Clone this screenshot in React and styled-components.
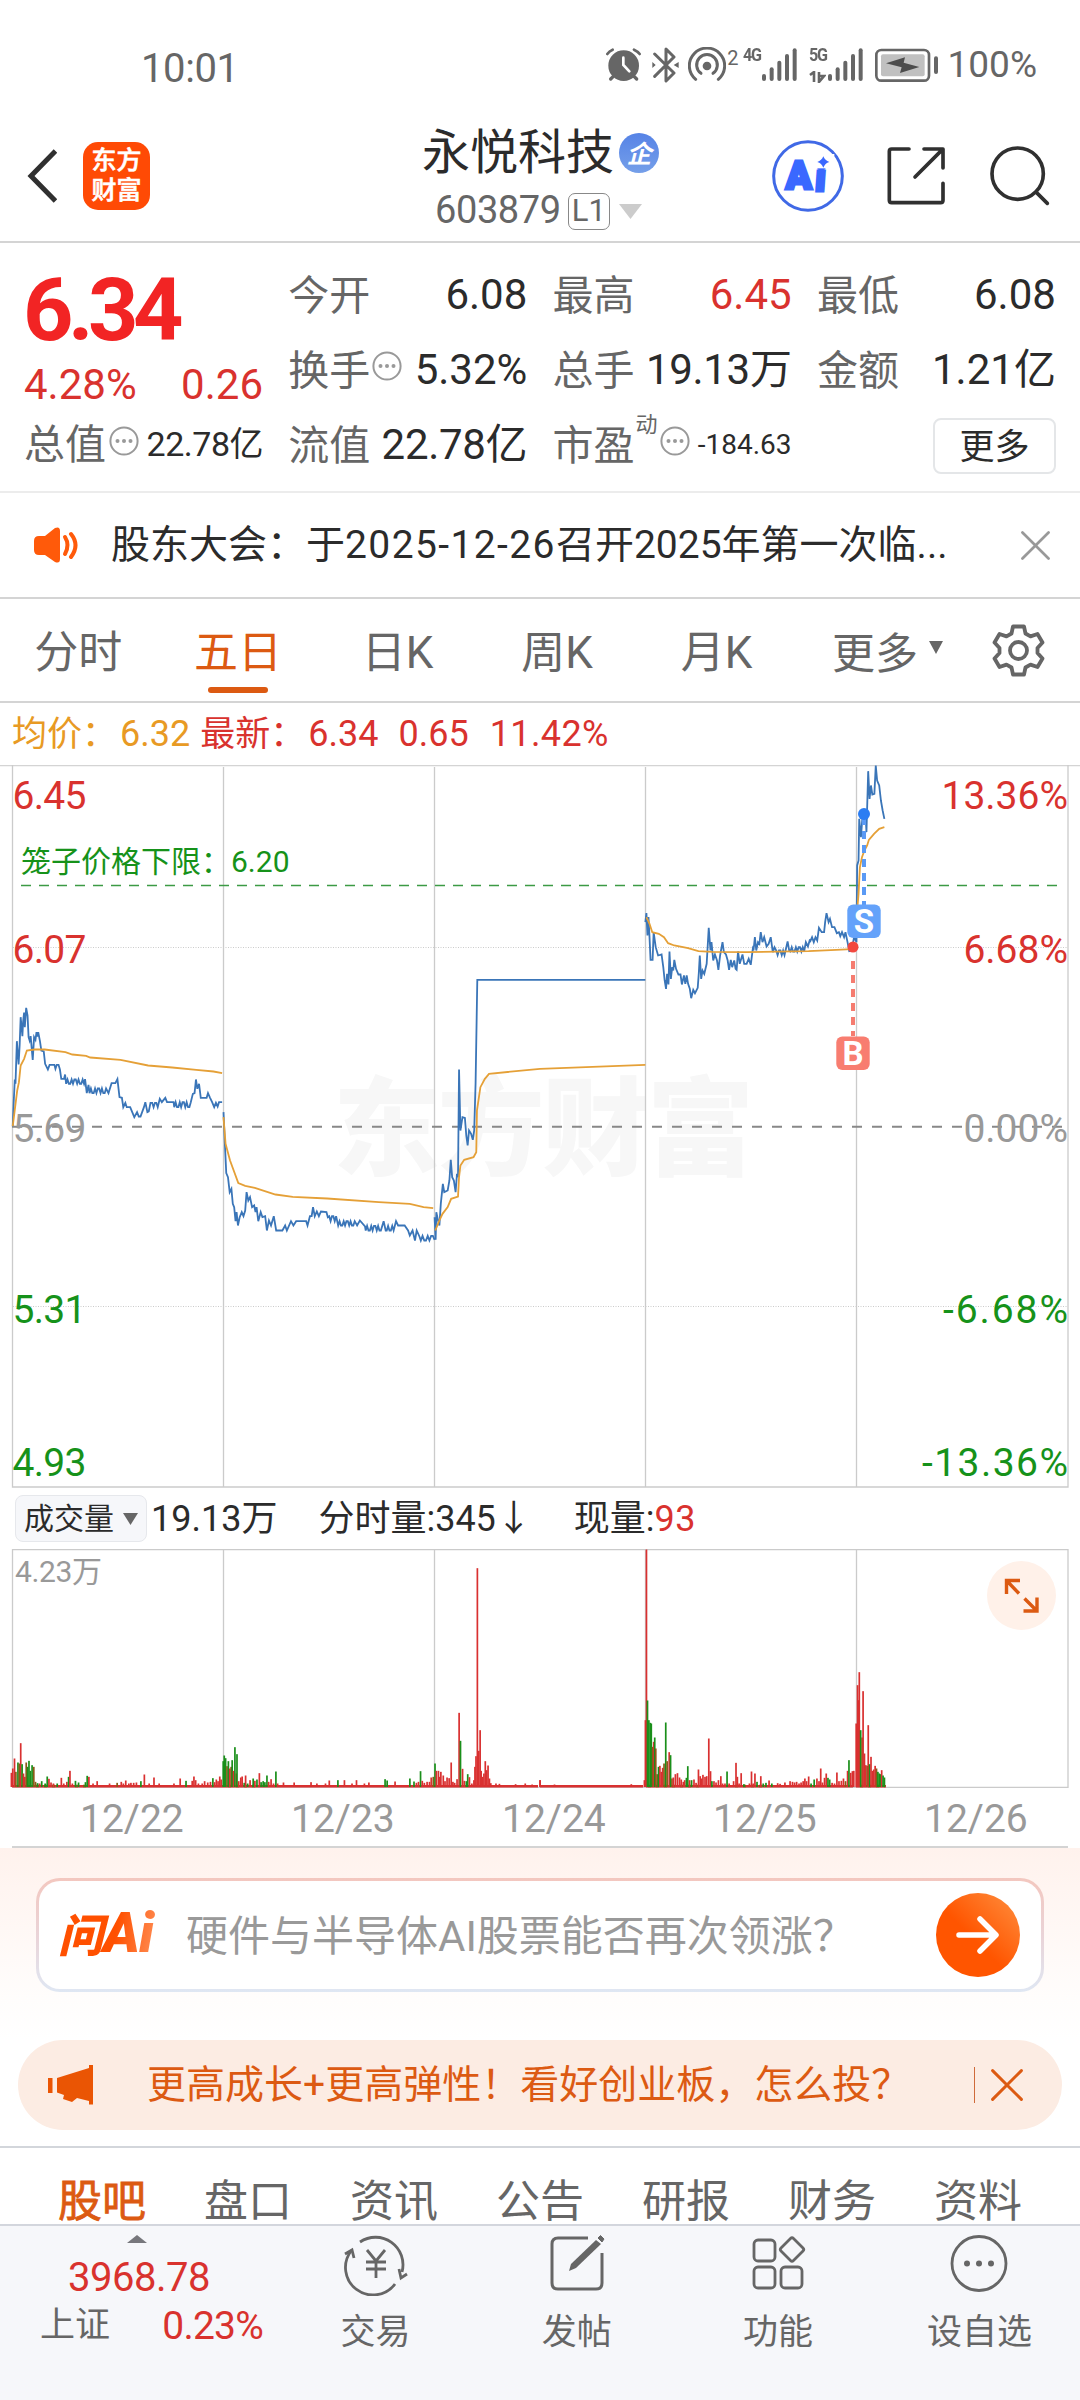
import React from 'react';
import styled, { createGlobalStyle } from 'styled-components';

const C = {
  red: '#d9322e',
  green: '#16921a',
  ink: '#2b2b2b',
  mid: '#666',
  soft: '#999',
  line: '#d4d4d4',
  orange: '#dc5a12',
  blue: '#3a75b8',
  avg: '#e5a037',
};

const Global = createGlobalStyle`
  * { box-sizing: border-box; }
  html, body { margin: 0; background: #fff; }
  body {
    font-family: Roboto, 'Noto Sans CJK SC', sans-serif;
    color: ${C.ink};
    width: 1080px;
  }
  svg { display: block; flex: none; }
  svg text { font-family: Roboto, 'Noto Sans CJK SC', sans-serif; }
`;

const Page = styled.div`
  width: 1080px;
  height: 2400px;
  overflow: hidden;
  display: flex;
  flex-direction: column;
  background: #fff;
`;

const Txt = styled.span`
  font-size: ${(p) => p.$size || 40}px;
  line-height: 1.1;
  color: ${(p) => p.$color || C.ink};
  font-weight: ${(p) => p.$weight || 400};
  letter-spacing: ${(p) => p.$ls || 0}px;
  margin-left: ${(p) => p.$ml || 0}px;
  white-space: nowrap;
  flex: none;
`;
const Wide = styled.span`
  letter-spacing: 1.4px;
`;

/* ---------- status bar ---------- */

const StatusBar = styled.div`
  height: 100px;
  padding: 34px 43px 0 141px;
  display: flex;
  justify-content: space-between;
  align-items: flex-start;
`;
const StatusIcons = styled.div`
  display: flex;
  align-items: center;
  height: 36px;
  margin-top: 13px;
`;
const Clock = styled(Txt)`
  margin-top: 13px;
`;
const Space = styled.i`
  width: ${(p) => p.$w}px;
  flex: none;
`;
const Stack = styled.div`
  height: 36px;
  display: flex;
  flex-direction: column;
  justify-content: space-between;
`;
const Tiny = styled.span`
  font-size: 19px;
  line-height: 16px;
  font-weight: 700;
  color: ${C.mid};
  letter-spacing: -1.5px;
  width: 19px;
  transform: scaleX(0.85);
  transform-origin: left;
`;

const AlarmIcon = () => (
  <svg width="36" height="36" viewBox="48 54 108 108">
    <g fill="none" stroke={C.mid} strokeLinecap="round">
      <path d="M52 75Q58 66 68 62M132 62Q143 67 149 75" strokeWidth="8" />
      <path d="M62 150l8-8M140 150l-8-8" strokeWidth="10" />
    </g>
    <circle cx="101" cy="110" r="46" fill={C.mid} />
    <path d="M100 86V108L118 127" fill="none" stroke="#fff" strokeWidth="8" strokeLinecap="round" />
  </svg>
);
const BluetoothIcon = () => (
  <svg width="27" height="36" viewBox="184 52 81 108">
    <path d="M192 73L250 130L226 154V58L250 82L192 140" fill="none" stroke={C.mid} strokeWidth="9" strokeLinejoin="round" strokeLinecap="round" />
    <path d="M185 97l10 9l-10 9zM264 97l-15 9l15 9z" fill={C.mid} />
  </svg>
);
const HotspotIcon = () => (
  <svg width="38" height="36" viewBox="294 52 114 108">
    <g fill="none" stroke={C.mid} strokeWidth="9" strokeLinecap="round">
      <path d="M317 149A53 53 0 1 1 385 149" />
      <path d="M333 131A31 31 0 1 1 369 131" />
    </g>
    <circle cx="351" cy="109" r="13" fill={C.mid} />
  </svg>
);
const SignalBars = () => (
  <svg width="35" height="36" viewBox="0 52 105 108">
    {[133, 113, 93, 73, 56].map((y, i) => (
      <rect key={y} x={i * 23} y={y} width="12" height={154 - y} rx="6" fill={C.mid} />
    ))}
  </svg>
);
const DataArrows = () => (
  <svg width="17" height="12" viewBox="0 0 17 12">
    <path d="M1 4L5 1V11M10 1V11L15 5L10 5" fill="none" stroke={C.mid} strokeWidth="2.6" />
  </svg>
);
const BatteryIcon = () => (
  <svg width="64" height="36" viewBox="855 52 192 108">
    <rect x="859" y="61" width="158" height="92" rx="15" fill="#fff" stroke={C.mid} strokeWidth="8" />
    <rect x="873" y="74" width="131" height="66" rx="6" fill="#c0c0c0" />
    <path d="M888 101L945 83L941 99L988 112L930 130L935 113Z" fill="#4c4c4c" />
    <rect x="1032" y="80" width="12" height="53" rx="6" fill={C.mid} />
  </svg>
);

/* ---------- header ---------- */

const Header = styled.header`
  height: 143px;
  border-bottom: 2px solid ${C.line};
  display: flex;
  padding: 0 30px 0 27px;
`;
const HeadSide = styled.div`
  display: flex;
  align-items: center;
  height: 151px;
  width: ${(p) => p.$w}px;
  justify-content: ${(p) => (p.$end ? 'flex-end' : 'flex-start')};
`;
const Logo = styled.div`
  width: 67px;
  height: 68px;
  margin-left: 26px;
  border-radius: 15px;
  background: #ff4a05;
  color: #fff;
  font: 500 25px/30px Roboto, 'Noto Sans CJK SC', sans-serif;
  -webkit-text-stroke: 0.6px #fff;
  display: flex;
  flex-direction: column;
  align-items: center;
  justify-content: center;
`;
const Title = styled.div`
  flex: 1;
  display: flex;
  flex-direction: column;
`;
const TitleRow = styled.div`
  display: flex;
  align-items: center;
  height: 50px;
  margin-top: ${(p) => p.$mt}px;
  margin-left: ${(p) => p.$ml}px;
`;
const Badge = styled.div`
  width: 40px;
  height: 40px;
  margin-left: 5px;
  border-radius: 50%;
  background: linear-gradient(#5683e6, #759fe9);
  color: #fff;
  font: italic 700 25px/38px 'Noto Sans CJK SC', sans-serif;
  text-align: center;
`;
const Level = styled.span`
  width: 42px;
  height: 37px;
  margin-left: 7px;
  border: 1.5px solid #888;
  border-radius: 7px;
  font-size: 31px;
  line-height: 34px;
  text-align: center;
  color: ${C.mid};
`;

const AiIcon = () => (
  <svg width="72" height="72" viewBox="547 328 216 216">
    <circle cx="655" cy="436" r="103" fill="none" stroke="#4069e6" strokeWidth="9" />
    <g fill="#3a68ff" stroke="#3a68ff" strokeWidth="9" fontWeight="900" fontSize="114">
      <text x="588" y="474" textLength="78" lengthAdjust="spacingAndGlyphs">A</text>
      <text x="674" y="480" transform="skewX(-4) translate(34 0)">i</text>
    </g>
    <rect x="676" y="370" width="58" height="43" fill="#fff" />
    <path d="M701 377Q706 390 719 394Q706 398 701 411Q696 398 683 394Q696 390 701 377Z" fill="#3a68ff" />
  </svg>
);
const ShareIcon = () => (
  <svg width="59" height="60" viewBox="892 347 177 180">
    <g fill="none" stroke="#303030" strokeWidth="11" strokeLinecap="round" strokeLinejoin="round">
      <path d="M958 356H906Q899 356 899 363V510Q899 517 906 517H1053Q1060 517 1060 510V459" />
      <path d="M1003 356H1060V413M976 440L1058 358" />
    </g>
  </svg>
);
const SearchIcon = () => (
  <svg width="61" height="60" viewBox="1200 345 183 180">
    <g fill="none" stroke="#303030" strokeWidth="11" strokeLinecap="round">
      <circle cx="1286" cy="428" r="77" />
      <path d="M1342 484L1375 517" />
    </g>
  </svg>
);

/* ---------- quote ---------- */

const Quote = styled.section`
  height: 250px;
  border-bottom: 2px solid #ececec;
  padding: 15px 24px 0 24px;
  display: grid;
  grid-template-columns: repeat(4, 239px);
  column-gap: 25.3px;
`;
const QuoteCol = styled.div`
  display: flex;
  flex-direction: column;
`;
const Cell = styled.div`
  height: ${(p) => p.$h || 75}px;
  display: flex;
  align-items: center;
  justify-content: space-between;
`;
const Label = styled.span`
  font-size: 41px;
  line-height: 50px;
  color: ${C.mid};
  display: flex;
  align-items: center;
`;
const Price = styled.div`
  height: 106px;
  padding: 0;
  margin-left: -1px;
  font-size: 88px;
  line-height: 104px;
  font-weight: 700;
  color: #f22424;
  letter-spacing: -5.5px;
`;
const Sup = styled.sup`
  font-size: 22px;
  line-height: 22px;
  margin: -42px 2px 0 1px;
`;
const MoreBtn = styled.button`
  width: 123px;
  height: 56px;
  margin-left: auto;
  border: 2px solid #e4e6e8;
  border-radius: 8px;
  background: #fff;
  padding: 0 0 4px;
  font: 400 35px/48px 'Noto Sans CJK SC', sans-serif;
  color: ${C.ink};
`;
const DotsSvg = styled.svg`
  margin-top: -9px;
`;
const DotsIcon = () => (
  <DotsSvg width="30" height="30" viewBox="0 0 30 30">
    <circle cx="15" cy="15" r="13.6" fill="none" stroke="#999" strokeWidth="2" />
    {[8.5, 15, 21.5].map((x) => <circle key={x} cx={x} cy="15" r="2" fill="#999" />)}
  </DotsSvg>
);

/* ---------- notice ---------- */

const Notice = styled.section`
  height: 106px;
  border-bottom: 2px solid ${C.line};
  padding: 0 30px 0 33px;
  display: flex;
  align-items: center;
  justify-content: space-between;
`;
const Row = styled.div`
  display: flex;
  align-items: center;
`;
const SpeakerIcon = () => (
  <svg width="46" height="36" viewBox="0 0 46 36">
    <path d="M6 9H12L22 1Q27-1 27 4V32Q27 37 22 35L12 28H6Q1 28 1 23V14Q1 9 6 9Z" fill="#ff5a0a" />
    <g fill="none" stroke="#ff5a0a" strokeWidth="4" strokeLinecap="round">
      <path d="M32 10Q37 18 32 27" />
      <path d="M38 7Q47 18 38 30" />
    </g>
  </svg>
);
const Cross = ({ size, color, w = 2.8 }) => (
  <svg width={size} height={size} viewBox="0 0 30 30">
    <path d="M1.5 1.5L28.5 28.5M28.5 1.5L1.5 28.5" stroke={color} strokeWidth={w} strokeLinecap="round" />
  </svg>
);

/* ---------- period tabs ---------- */

const Periods = styled.nav`
  height: 104px;
  border-bottom: 2px solid ${C.line};
  display: flex;
  padding-right: 35px;
`;
const Period = styled.div`
  width: 159.6px;
  height: 102px;
  padding: 29px 3px 0 0;
  display: flex;
  flex-direction: column;
  align-items: center;
  font-size: 44px;
  line-height: 50px;
  color: ${(p) => (p.$on ? C.orange : C.mid)};
  &::after {
    content: '';
    width: 60px;
    height: 6px;
    margin-top: 9px;
    border-radius: 3px;
    background: ${(p) => (p.$on ? C.orange : 'transparent')};
  }
`;
const PeriodMore = styled.div`
  height: 102px;
  margin-left: 34px;
  display: flex;
  align-items: center;
  font-size: 43px;
  color: ${C.mid};
  gap: 11px;
  svg { margin-bottom: 5px; }
`;
const GearWrap = styled.div`
  margin: 25px 0 0 auto;
`;
const Tri = ({ w, h, color, up }) => (
  <svg width={w} height={h} viewBox="0 0 10 10" preserveAspectRatio="none">
    <path d={up ? 'M0 10H10L5 0Z' : 'M0 0H10L5 10Z'} fill={color} />
  </svg>
);
const GearIcon = () => (
  <svg width="53" height="53" viewBox="0 0 53 53" fill="none" stroke={C.mid} strokeWidth="3.8" strokeLinejoin="round">
    <path d="M21 2.5H32L33.5 9.5L38.5 12.4L45.5 10L50.5 18.5L45.5 24V29L50.5 34.5L45.5 43L38.5 40.6L33.5 43.5L32 50.5H21L19.5 43.5L14.5 40.6L7.5 43L2.5 34.5L7.5 29V24L2.5 18.5L7.5 10L14.5 12.4L19.5 9.5Z" />
    <circle cx="26.5" cy="26.5" r="8.5" />
  </svg>
);

const Legend = styled.div`
  height: 62px;
  padding: 2px 0 0 12px;
  display: flex;
  align-items: center;
`;

/* ---------- price chart ---------- */

const Chart = styled.svg`
  width: 1080px;
  height: ${(p) => p.$h}px;
`;

const zig = (x0, x1, a, b, step = 4) => {
  const out = [];
  for (let x = x0, i = 0; x < x1; x += step, i += 1) {
    out.push([x, [a, b, a, a, b, a, b, b][i % 8]]);
  }
  return out;
};
const parse = (s) => s.trim().split(/\s+/).map((p) => p.split(',').map(Number));
const poly = (...parts) => parts.flatMap((p) => (typeof p === 'string' ? parse(p) : p)).map((p) => p.join(',')).join(' ');

const LEFT = {
  price: [
    poly(
      '37,1127 40,1050 43,987 45,1000 49,872 54,942 57,885 60,800 65,857 67,815 70,786 72,830 76,772 80,795 83,860 86,870 89,857 95,928 99,860 103,868 106,845 108,858 111,845 116,872 120,900 127,903 131,940 139,957 144,943 158,943 161,955 165,943 170,943 174,957 178,985 186,985 189,972',
      zig(192, 247, 1000, 987),
      '247,986 252,1028 257,1003',
      zig(260, 312, 1028, 1014),
      '315,1028 324,998 335,998 341,986 347,1040 354,1042 358,1070 364,1057 368,1070 378,1070 390,1100 398,1085 403,1098 408,1098 418,1070 422,1055 428,1085 432,1083 437,1057',
      zig(442, 462, 1057, 1070),
      '464,1045 470,1055 480,1042 485,1055 504,1055',
      zig(506, 556, 1070, 1055),
      '560,1030 565,1028 569,987 573,1015 578,1000 583,1042 600,1042 604,1028 610,1042 616,1055 622,1070 627,1057 632,1068 636,1055 645,1055',
    ),
    poly(
      '649,1085 653,1180 657,1268 662,1280 667,1325 672,1315 676,1360 680,1370 684,1412 687,1385 691,1425 696,1400 702,1385 707,1397 712,1380 716,1325 721,1350 726,1340 732,1370 738,1365 742,1385 745,1370 750,1412 757,1385 762,1400 770,1397 775,1440 781,1410 787,1425 795,1397 802,1440 820,1440 828,1425 833,1440 845,1412 852,1425 860,1412 889,1412 893,1425 900,1397 905,1397 909,1370 914,1397 920,1383 926,1397 932,1383 948,1385 952,1400',
      zig(956, 980, 1397, 1412),
      zig(982, 1034, 1425, 1412),
      '1037,1425 1045,1410 1060,1428',
      zig(1062, 1110, 1440, 1426),
      '1114,1412 1120,1440',
      zig(1123, 1147, 1440, 1426),
      '1150,1412 1156,1425 1175,1425 1185,1440 1190,1455 1198,1440 1205,1470 1210,1440 1218,1458',
      zig(1222, 1258, 1470, 1456, 5),
      '1262,1468',
    ),
    poly('1262,1400 1265,1468 1267,1385 1272,1410 1276,1425 1280,1360 1286,1300 1290,1325 1300,1320 1305,1290 1309,1228 1313,1280 1318,1290 1323,1325 1327,1270 1330,1280 1333,957 1337,1140 1343,1100 1350,1102 1354,1155 1358,1185 1362,1140 1368,1150 1373,1168 1377,1140 1381,1000 1386,688 1874,688'),
  ],
  avg: [
    '37,1127 50,1020 55,995 60,945 70,925 78,900 100,897 130,897 190,905 210,912 250,916 262,921 350,928 430,945 500,951 570,958 620,963 645,968',
    '649,1100 655,1180 668,1230 692,1298 712,1306 740,1312 800,1332 850,1339 950,1344 1100,1355 1190,1360 1230,1370 1258,1373',
    '1264,1440 1275,1412 1285,1390 1300,1370 1310,1345 1330,1338 1333,1280 1337,1245 1348,1228 1375,1220 1383,1205 1385,1080 1395,1010 1408,985 1420,970 1568,955 1874,943',
  ],
};
const RIGHT = {
  price: [
    poly(
      '306,515 309,488 312,555 315,500 318,560 321,628 327,628 330,545 336,590 343,615 353,612 358,650 362,690 366,715 369,670 373,702 376,603 380,685 384,650 387,660 390,628 395,655 402,672 408,672 412,702 418,675 422,700 426,675 430,700 435,715 439,743 445,718 450,728 458,712 461,670 464,615 468,685 472,660 477,670 484,640 490,532 495,600 498,575 503,630 508,612 514,630 518,658 523,615 530,575 534,605 540,612 545,630 549,658 554,628 558,650 564,630 568,655 571,658 575,603 580,640 588,612 593,640 600,640 606,625 612,643 618,595 620,600 624,560 628,600 633,575 637,580 641,545 646,575 651,560 658,588 664,580 670,560 676,605 681,590',
      zig(686, 713, 600, 614),
      '719,573 724,602',
      zig(727, 768, 603, 590),
      '772,575 778,588 783,570 785,572 790,560 795,575 800,560 805,570 810,532 818,545 825,545 828,515 832,488 838,515 842,505 848,530 855,530 862,548 868,545 872,557 877,545 883,560 887,545 893,575 898,602 905,600 912,560 919,575 921,345 925,330 927,205 932,260 937,190 942,210 945,185 948,245 953,62 957,145 961,105 965,132 971,130 975,45 979,90 985,105 990,150 995,180 1000,205',
    ),
  ],
  avg: [
    '309,500 318,520 326,545 345,550 360,560 372,578 390,585 430,593 460,602 500,604 600,605 780,602 860,598 905,596',
    '921,480 925,430 929,350 935,320 942,300 950,285 955,268 970,250 985,235 1000,230',
  ],
};

const Curves = ({ data, x }) => (
  <g transform={`translate(${x} -14.5) scale(.34437 .33333)`} fill="none">
    {data.price.map((p) => (
      <polyline key={p} points={p} stroke={C.blue} strokeWidth="1.8" vectorEffect="non-scaling-stroke" />
    ))}
    {data.avg.map((p) => (
      <polyline key={p} points={p} stroke={C.avg} strokeWidth="1.8" vectorEffect="non-scaling-stroke" />
    ))}
  </g>
);

const SCALE = [
  ['6.45', '13.36%', C.red, 43.5],
  ['6.07', '6.68%', C.red, 197.5],
  ['5.69', '0.00%', C.soft, 377],
  ['5.31', '-6.68%', C.green, 557.5, 125],
  ['4.93', '-13.36%', C.green, 711, 146],
];

const Marker = ({ x, y, fill, children }) => (
  <g>
    <rect x={x - 16.7} y={y} width="33.4" height="33.4" rx="6" fill={fill} />
    <text x={x} y={y + 28} fontSize="33" fontWeight="700" textAnchor="middle" fill="#fff">{children}</text>
  </g>
);

const PriceChart = () => (
  <Chart $h={724} viewBox="0 0 1080 724">
    <text x="333" y="402" fontSize="107" fontWeight="900" fill="#f7f7f7" textLength="421">东方财富</text>
    <g stroke="#cbcbcb" strokeWidth="1.3" fill="none">
      <path d="M0 .5H1080" stroke={C.line} strokeWidth="1.6" />
      <path d="M12.5 0V722H1068V0M223.5 2V722M434.5 2V722M645.5 2V722M856.5 2V722" />
      <path d="M13 182.5H1068M13 541.5H1068" strokeDasharray="1 1.5" strokeWidth="1" />
    </g>
    <path d="M21 120.5H1058" stroke="#3c9a45" strokeWidth="1.5" strokeDasharray="10 8" />
    <path d="M12 361.7H1062" stroke="#888" strokeWidth="2" strokeDasharray="10 10" />
    <Curves data={LEFT} x={0} />
    <Curves data={RIGHT} x={540} />
    <text x="21" y="107" fontSize="30" fill={C.green}>笼子价格下限：</text>
    <text x="231" y="107" fontSize="30" fill={C.green}>6.20</text>
    {SCALE.map(([price, pct, color, y, len]) => (
      <g key={price} fill={color} fontSize="39">
        <text x="12.5" y={y} textLength="74">{price}</text>
        <text x="1068" y={y} textAnchor="end" textLength={len}>{pct}</text>
      </g>
    ))}
    <path d="M864 52V140" stroke="#5a9af5" strokeWidth="4" strokeDasharray="8 6" />
    <circle cx="864" cy="49" r="6" fill="#2b7df2" />
    <Marker x={864} y={139.5} fill="#64a2fa">S</Marker>
    <path d="M853 196V271" stroke="#f57c70" strokeWidth="4" strokeDasharray="8 6" />
    <circle cx="853" cy="182" r="5.5" fill="#f2483f" />
    <Marker x={853} y={271.5} fill="#f87d70">B</Marker>
  </Chart>
);

/* ---------- volume ---------- */

const VolHead = styled.div`
  height: 60px;
  padding: 6px 0 0 15px;
  display: flex;
  align-items: flex-start;
`;
const VolBtn = styled.div`
  width: 132px;
  height: 47px;
  border: 1.5px solid #e6e8ec;
  border-radius: 8px;
  background: #f6f7fa;
  display: flex;
  align-items: center;
  padding-left: 8px;
  gap: 9px;
`;
const VolText = styled.div`
  height: 47px;
  display: flex;
  align-items: center;
  padding-top: 3px;
`;

const R = '#d93030';
const G = '#1a8f1a';
const M = '#8a5a18';
const VOL = {
  left: `33,818,R 37,805,R 42,775,R 46,815,M 52,787,G 56,790,M 60,729,R 64,792,G 68,820,R 72,830,R 76,787,M 80,800,G 84,782,G 88,812,G 93,795,G 98,800,M 103,845,M 109,849,G 115,850,R 121,843,G 131,850,G 137,829,G 142,836,R 148,847,R 155,850,R 166,850,G 178,833,R 185,850,R 194,845,R 199,830,G 203,812,R 210,850,R 219,842,G 228,847,G 248,846,G 253,827,G 258,830,R 270,850,R 282,843,R 318,850,R 340,848,M 352,845,R 358,850,R 365,841,R 374,850,R 380,848,R 388,848,R 396,847,R 409,843,G 419,823,R 433,850,R 447,832,R 462,850,R 505,850,R 523,835,R 540,842,G 558,842,R 563,829,R 568,840,R 576,850,R 587,850,R 594,843,R 603,847,R 611,845,R 618,834,G 623,846,R 628,838,R 633,843,R 638,829,R 642,838,R
648,783,G 651,766,G 655,774,G 659,798,M 663,783,G 667,805,R 671,800,M 674,780,G 678,812,R 682,741,G 686,820,M 688,762,G 693,843,R 699,832,R 703,829,R 709,848,G 713,826,R 719,850,G 726,840,R 735,835,G 740,842,R 746,838,G 753,819,R 758,846,G 764,843,G 769,846,G 775,826,G 780,845,R 787,837,R 794,850,R 801,814,G 806,850,R 823,847,R 854,847,R 903,846,R 920,850,R 945,850,R 956,841,R 981,840,G 1000,840,R 1022,850,R 1035,840,R 1058,850,R 1071,847,R 1118,837,G 1124,841,G 1147,844,R 1190,835,G 1202,844,G 1209,848,R 1215,845,R 1221,813,G 1226,842,R 1232,848,R 1240,845,R 1247,845,R 1252,832,R 1258,830,M
1263,790,G 1267,812,R 1273,812,R 1277,830,R 1280,815,R 1287,826,R 1292,843,R 1298,832,R 1304,834,R 1310,787,R 1315,845,R 1320,848,R 1327,837,R 1333,638,R 1337,722,G 1343,806,R 1348,842,R 1354,843,G 1358,822,G 1363,831,R 1370,850,R 1376,840,R 1379,800,R 1382,768,R 1386,204,R 1390,752,R 1394,690,R 1397,812,R 1401,830,R 1405,820,R 1409,783,R 1413,810,R 1417,796,R 1421,835,R 1425,849,R 1440,850,R 1450,851,R 1497,852,R 1525,850,R 1545,853,R 1568,840,R`,
  right: `0,840,R 42,853,R 265,852,R 303,840,R 306,660,R 309,148,R 312,601,G 316,660,G 320,668,G 323,670,G 327,740,M 330,725,R 333,712,G 336,745,M 340,822,M 344,800,G 348,797,R 352,815,R 356,803,R 360,790,M 365,667,G 369,783,M 375,756,R 379,765,G 383,835,M 387,832,R 393,822,R 399,819,R 405,832,R 410,838,R 416,845,R 420,840,R 425,833,G 429,798,G 434,840,R 440,840,G 447,838,R 453,848,R 460,808,R 465,828,R 469,835,R 473,824,R 479,830,R 484,828,R 490,715,R 495,813,R 499,843,G 505,843,R 511,847,R 518,840,R 525,828,R 530,850,R 537,850,R 543,814,G 549,850,R 562,843,R 569,788,R 573,830,R 578,850,R 584,819,R 592,852,G 608,850,R 614,814,R 619,850,R 624,820,R 630,845,G 641,828,R 648,850,G 656,848,G 665,841,R 673,850,G 690,849,R 697,851,R 711,847,R 726,843,R 733,845,R 739,847,R 745,845,R 752,850,R 758,847,R 764,843,R 769,835,R 774,843,R 780,829,R 787,850,G 796,838,G 804,835,R 810,843,R 815,805,R 820,847,R 826,833,R 831,820,R 836,833,G 841,838,G 848,848,R 855,850,R 862,817,R 868,843,R 875,842,R 881,835,R 887,843,M 893,812,R 897,780,G 902,818,R 907,813,R 911,812,R
918,670,R 922,555,R 925,600,R 927,516,R 931,690,G 935,712,M 938,573,R 942,760,R 946,795,R 950,797,M 953,675,R 957,792,G 961,770,R 965,812,R 969,808,R 973,797,R 977,805,M 981,815,G 985,820,G 989,822,G 992,810,R 996,826,G 1000,832,G`,
};
const TONE = { R, G, M };
const bars = (s) => s.trim().split(/\s+/).map((b) => b.split(','));

const VolBars = ({ data, x }) => (
  <g>
    {bars(data).map(([bx, top, tone]) => {
      const px = x + Number(bx) / 2.9037;
      const py = (Number(top) - 148) / 3 + 0.5;
      return <rect key={bx} x={px - 0.8} y={py} width="1.7" height={238 - py} fill={TONE[tone]} />;
    })}
  </g>
);

const VolWrap = styled.div`
  position: relative;
  height: 239px;
`;
const Expand = styled.button`
  position: absolute;
  right: 24px;
  top: 12px;
  width: 69px;
  height: 69px;
  padding: 0;
  border: 0;
  border-radius: 50%;
  background: #fff1e9;
  display: grid;
  place-items: center;
`;

const VolumeChart = () => (
  <VolWrap>
    <Chart $h={239} viewBox="0 0 1080 239">
      <path
        d="M12.5 238.3V.7H1068V238.3H12.5M223.5 1V238M434.5 1V238M645.5 1V238M856.5 1V238"
        fill="none" stroke="#cbcbcb" strokeWidth="1.3"
      />
      <path d="M12 237.2H538M540 237.2H643M646 237.2H853M856 237.2H886" stroke={R} strokeWidth="2.4" />
      <path d="M36 237H60M75 237H88M228 237H260M648 237H700M735 237H765M860 237H885" stroke={M} strokeWidth="2.4" strokeDasharray="3 5" />
      <VolBars data={VOL.left} x={0} />
      <VolBars data={VOL.right} x={540} />
      <text x="15" y="32.5" fontSize="30" fill={C.soft} textLength="87">4.23万</text>
    </Chart>
    <Expand>
      <svg width="35" height="36" viewBox="0 0 35 36" fill="none" stroke={C.orange} strokeWidth="3.4">
        <path d="M16 2.5H2.5V16M3 3L15 15.5M19.5 33H33V19.5M32.5 32.5L20.5 20.5" />
      </svg>
    </Expand>
  </VolWrap>
);

const Dates = styled.div`
  height: 60px;
  margin: 0 12px;
  border-bottom: 2px solid ${C.line};
  display: grid;
  grid-template-columns: repeat(5, 211px);
  align-items: center;
  padding: 4px 0 0 68px;
  font-size: 39px;
  color: ${C.soft};
  overflow: hidden;
`;

/* ---------- AI question ---------- */

const AskArea = styled.section`
  height: 192px;
  padding: 30px 36px 0;
  background: linear-gradient(#fff2ed, #fffdfc 150px, #fff);
`;
const AskBox = styled.div`
  height: 114px;
  border: 3px solid transparent;
  border-radius: 24px;
  background: linear-gradient(#fff, #fff) padding-box,
    linear-gradient(#f3c7bf, #e9d5da 55%, #dfe7f3) border-box;
  display: flex;
  align-items: center;
  padding: 0 21px 0 19px;
`;
const AskText = styled(Txt)`
  padding-top: 4px;
`;
const AskLogo = styled.span`
  width: 128px;
  font: italic 900 45px/56px Roboto, 'Noto Sans CJK SC', sans-serif;
  color: transparent;
  background: linear-gradient(100deg, #ff5000 45%, #ff9058 78%);
  background-clip: text;
  -webkit-background-clip: text;
`;
const AskLatin = styled.span`
  font-size: 56px;
  letter-spacing: -1px;
`;
const AskBtn = styled.button`
  width: 84px;
  height: 84px;
  margin-left: auto;
  border: 0;
  padding: 0;
  border-radius: 50%;
  background: linear-gradient(225deg, #ff9040, #ff5500 55%);
  display: grid;
  place-items: center;
`;

const Banner = styled.section`
  height: 90px;
  margin: 0 18px;
  border-radius: 45px;
  background: #fcece3;
  display: flex;
  align-items: center;
  padding: 0 39px 0 19px;
`;
const Divider = styled.i`
  width: 1.5px;
  height: 36px;
  margin: 0 16px 0 auto;
  background: #cf6a3a;
`;
const HornIcon = () => (
  <svg width="46" height="40" viewBox="0 0 46 40">
    <path d="M0 13H4.5V28H0ZM9 13L41 3V0H45V39.5H41V36L29 33L24 37L15 34L16 30L9 27.5Z" fill="#ea5504" />
  </svg>
);

/* ---------- section tabs & bottom bar ---------- */

const Sections = styled.nav`
  height: 78px;
  margin-top: 16px;
  border-top: 2px solid #d3d6db;
  padding: 30px 0 0 29px;
  display: flex;
`;
const Section = styled.span`
  width: 146px;
  text-align: center;
  font-size: 44px;
  line-height: 48px;
  height: 46px;
  color: ${(p) => (p.$on ? C.orange : C.mid)};
  -webkit-text-stroke: ${(p) => (p.$on ? '0.8px' : '0')} ${C.orange};
`;
const Bottom = styled.footer`
  flex: 1;
  border-top: 2px solid #d3d6dd;
  background: #f6f7fa;
  display: flex;
`;
const Index = styled.div`
  width: 275px;
  padding-top: 9px;
  display: flex;
  flex-direction: column;
  align-items: center;
`;
const IndexRow = styled.div`
  display: flex;
  align-items: center;
  justify-content: space-between;
  width: 223px;
  margin: ${(p) => p.$m};
`;
const Action = styled.div`
  width: 201.3px;
  padding-top: 6px;
  display: flex;
  flex-direction: column;
  align-items: center;
  font-size: 35px;
  line-height: 44px;
  color: ${C.mid};
  span { margin-top: 15px; }
`;
const iconProps = { width: 64, height: 64, viewBox: '0 0 64 64', fill: 'none', stroke: C.mid, strokeWidth: 2.8 };
const TradeIcon = () => (
  <svg {...iconProps}>
    <path d="M16 10A27.5 27.5 0 0 1 58 40M51 52A27.5 27.5 0 0 1 7 19" />
    <path d="M1 22L8 18L10 26M63 42L57 46L55 37" />
    <path d="M23 18L32 29L41 18M22 30H42M22 37H42M32 29V46" />
  </svg>
);
const PostIcon = () => (
  <svg {...iconProps} strokeWidth="3">
    <path d="M43 6H13Q7 6 7 12V51Q7 57 13 57H51Q57 57 57 51V21" />
    <path d="M24 39L26 32L51 8L56 12L31 36Z" fill={C.mid} stroke="none" />
    <path d="M53 6L55.5 3.5L59 7L57 10Z" fill={C.mid} stroke={C.mid} strokeWidth="1" />
  </svg>
);
const GridIcon = () => (
  <svg {...iconProps}>
    <rect x="8" y="8" width="21" height="21" rx="4" />
    <rect x="8" y="35" width="21" height="21" rx="4" />
    <rect x="35" y="35" width="21" height="21" rx="4" />
    <path d="M44.5 6.500Q46 5 47.5 6.500L57 16Q58.5 17.5 57 19L47.5 28.5Q46 30 44.5 28.5L35 19Q33.5 17.5 35 16Z" />
  </svg>
);
const MoreIcon = () => (
  <svg {...iconProps}>
    <circle cx="32" cy="31.5" r="27" />
    {[20, 32, 44].map((x) => <circle key={x} cx={x} cy="31.5" r="3" fill={C.mid} stroke="none" />)}
  </svg>
);

export default function App() {
  return (
    <Page>
      <Global />
      <StatusBar>
        <Clock $size={40} $color={C.mid} $ls={-0.4}>10:01</Clock>
        <StatusIcons>
          <AlarmIcon /><Space $w={10} />
          <BluetoothIcon /><Space $w={9} />
          <HotspotIcon />
          <Stack><Txt $size={20} $color={C.mid} $ml={1}>2</Txt></Stack><Space $w={4} />
          <Stack><Tiny>4G</Tiny></Stack>
          <SignalBars /><Space $w={12} />
          <Stack><Tiny>5G</Tiny><DataArrows /></Stack>
          <SignalBars /><Space $w={12} />
          <BatteryIcon /><Space $w={9} />
          <Txt $size={37} $color={C.mid}>100%</Txt>
        </StatusIcons>
      </StatusBar>

      <Header>
        <HeadSide $w={390}>
          <svg width="30" height="54" viewBox="0 0 30 54">
            <path d="M28.5 2L4 27L28.5 52" fill="none" stroke="#303030" strokeWidth="5" />
          </svg>
          <Logo><span>东方</span><span>财富</span></Logo>
        </HeadSide>
        <Title>
          <TitleRow $mt={28} $ml={5}>
            <Txt $size={48}>永悦科技</Txt>
            <Badge>企</Badge>
          </TitleRow>
          <TitleRow $mt={8} $ml={18}>
            <Txt $size={38} $color={C.mid} $ls={-0.4}>603879</Txt>
            <Level>L1</Level>
            <Space $w={9} />
            <Tri w={23} h={15} color="#ccc" />
          </TitleRow>
        </Title>
        <HeadSide $w={280} $end>
          <AiIcon /><Space $w={43} />
          <ShareIcon /><Space $w={43} />
          <SearchIcon />
        </HeadSide>
      </Header>

      <Quote>
        <QuoteCol>
          <Price>6.34</Price>
          <Cell $h={42}>
            <Txt $size={42} $color={C.red}>4.28%</Txt>
            <Txt $size={42} $color={C.red}>0.26</Txt>
          </Cell>
          <Cell $h={78}>
            <Label>总值<Space $w={3} /><DotsIcon /></Label>
            <Txt $size={34} $ls={-0.5}>22.78亿</Txt>
          </Cell>
        </QuoteCol>
        <QuoteCol>
          <Cell><Label>今开</Label><Txt $size={42}>6.08</Txt></Cell>
          <Cell><Label>换手<Space $w={2} /><DotsIcon /></Label><Txt $size={42}>5.32%</Txt></Cell>
          <Cell><Label>流值</Label><Txt $size={42} $ls={-0.3}>22.78亿</Txt></Cell>
        </QuoteCol>
        <QuoteCol>
          <Cell><Label>最高</Label><Txt $size={42} $color={C.red}>6.45</Txt></Cell>
          <Cell><Label>总手</Label><Txt $size={42} $ls={-0.3}>19.13万</Txt></Cell>
          <Cell><Label>市盈<Sup>动</Sup><DotsIcon /></Label><Txt $size={28}>-184.63</Txt></Cell>
        </QuoteCol>
        <QuoteCol>
          <Cell><Label>最低</Label><Txt $size={42}>6.08</Txt></Cell>
          <Cell><Label>金额</Label><Txt $size={42}>1.21亿</Txt></Cell>
          <Cell><MoreBtn>更多</MoreBtn></Cell>
        </QuoteCol>
      </Quote>

      <Notice>
        <Row>
          <SpeakerIcon />
          <Txt $size={39} $ml={32}>股东大会：于<Wide>2025-12-26</Wide>召开2025年第一次临...</Txt>
        </Row>
        <Cross size={29} color="#999" />
      </Notice>

      <Periods>
        <Period>分时</Period>
        <Period $on>五日</Period>
        <Period>日K</Period>
        <Period>周K</Period>
        <Period>月K</Period>
        <PeriodMore>更多<Tri w={14} h={13} color={C.mid} /></PeriodMore>
        <GearWrap><GearIcon /></GearWrap>
      </Periods>

      <Legend>
        <Txt $size={35} $color="#e89a24">均价：</Txt>
        <Txt $size={36} $color="#e89a24" $ml={3}>6.32</Txt>
        <Txt $size={35} $color={C.red} $ml={10}>最新：</Txt>
        <Txt $size={36} $color={C.red} $ml={3}>6.34</Txt>
        <Txt $size={36} $color={C.red} $ml={20}>0.65</Txt>
        <Txt $size={36} $color={C.red} $ml={21} $ls={0.4}>11.42%</Txt>
      </Legend>

      <PriceChart />

      <VolHead>
        <VolBtn>
          <Txt $size={30}>成交量</Txt>
          <Tri w={15} h={12} color={C.mid} />
        </VolBtn>
        <VolText>
          <Txt $size={36} $ml={4}>19.13万</Txt>
          <Txt $size={36} $ml={41}>分时量:345↓</Txt>
          <Txt $size={36} $ml={42}>现量:</Txt>
          <Txt $size={36} $color={C.red} $ls={0.4}>93</Txt>
        </VolText>
      </VolHead>
      <VolumeChart />
      <Dates>
        <span>12/22</span><span>12/23</span><span>12/24</span><span>12/25</span><span>12/26</span>
      </Dates>

      <AskArea>
        <AskBox>
          <AskLogo>问<AskLatin>Ai</AskLatin></AskLogo>
          <AskText $size={42} $color={C.soft}>硬件与半导体AI股票能否再次领涨？</AskText>
          <AskBtn>
            <svg width="44" height="40" viewBox="0 0 44 40">
              <path d="M3 20H39M24 4L40 20L24 36" fill="none" stroke="#fff" strokeWidth="5.5" strokeLinecap="round" strokeLinejoin="round" />
            </svg>
          </AskBtn>
        </AskBox>
      </AskArea>

      <Banner>
        <Space $w={11} />
        <HornIcon />
        <Txt $size={39} $color={C.orange} $ml={53}>更高成长+更高弹性！看好创业板，怎么投？</Txt>
        <Divider />
        <Cross size={32} color={C.orange} />
      </Banner>

      <Sections>
        <Section $on>股吧</Section>
        <Section>盘口</Section>
        <Section>资讯</Section>
        <Section>公告</Section>
        <Section>研报</Section>
        <Section>财务</Section>
        <Section>资料</Section>
      </Sections>
      <Bottom>
        <Index>
          <Tri w={20} h={8} color="#77777c" up />
          <IndexRow $m="13px 0 0 0"><Txt $size={40} $color={C.red} $ml={42} $ls={-0.5}>3968.78</Txt></IndexRow>
          <IndexRow $m="5px -28px 0 0">
            <Txt $size={35} $color={C.mid}>上证</Txt>
            <Txt $size={39} $color={C.red} $ls={-0.8}>0.23%</Txt>
          </IndexRow>
        </Index>
        <Action><TradeIcon /><span>交易</span></Action>
        <Action><PostIcon /><span>发帖</span></Action>
        <Action><GridIcon /><span>功能</span></Action>
        <Action><MoreIcon /><span>设自选</span></Action>
      </Bottom>
    </Page>
  );
}
